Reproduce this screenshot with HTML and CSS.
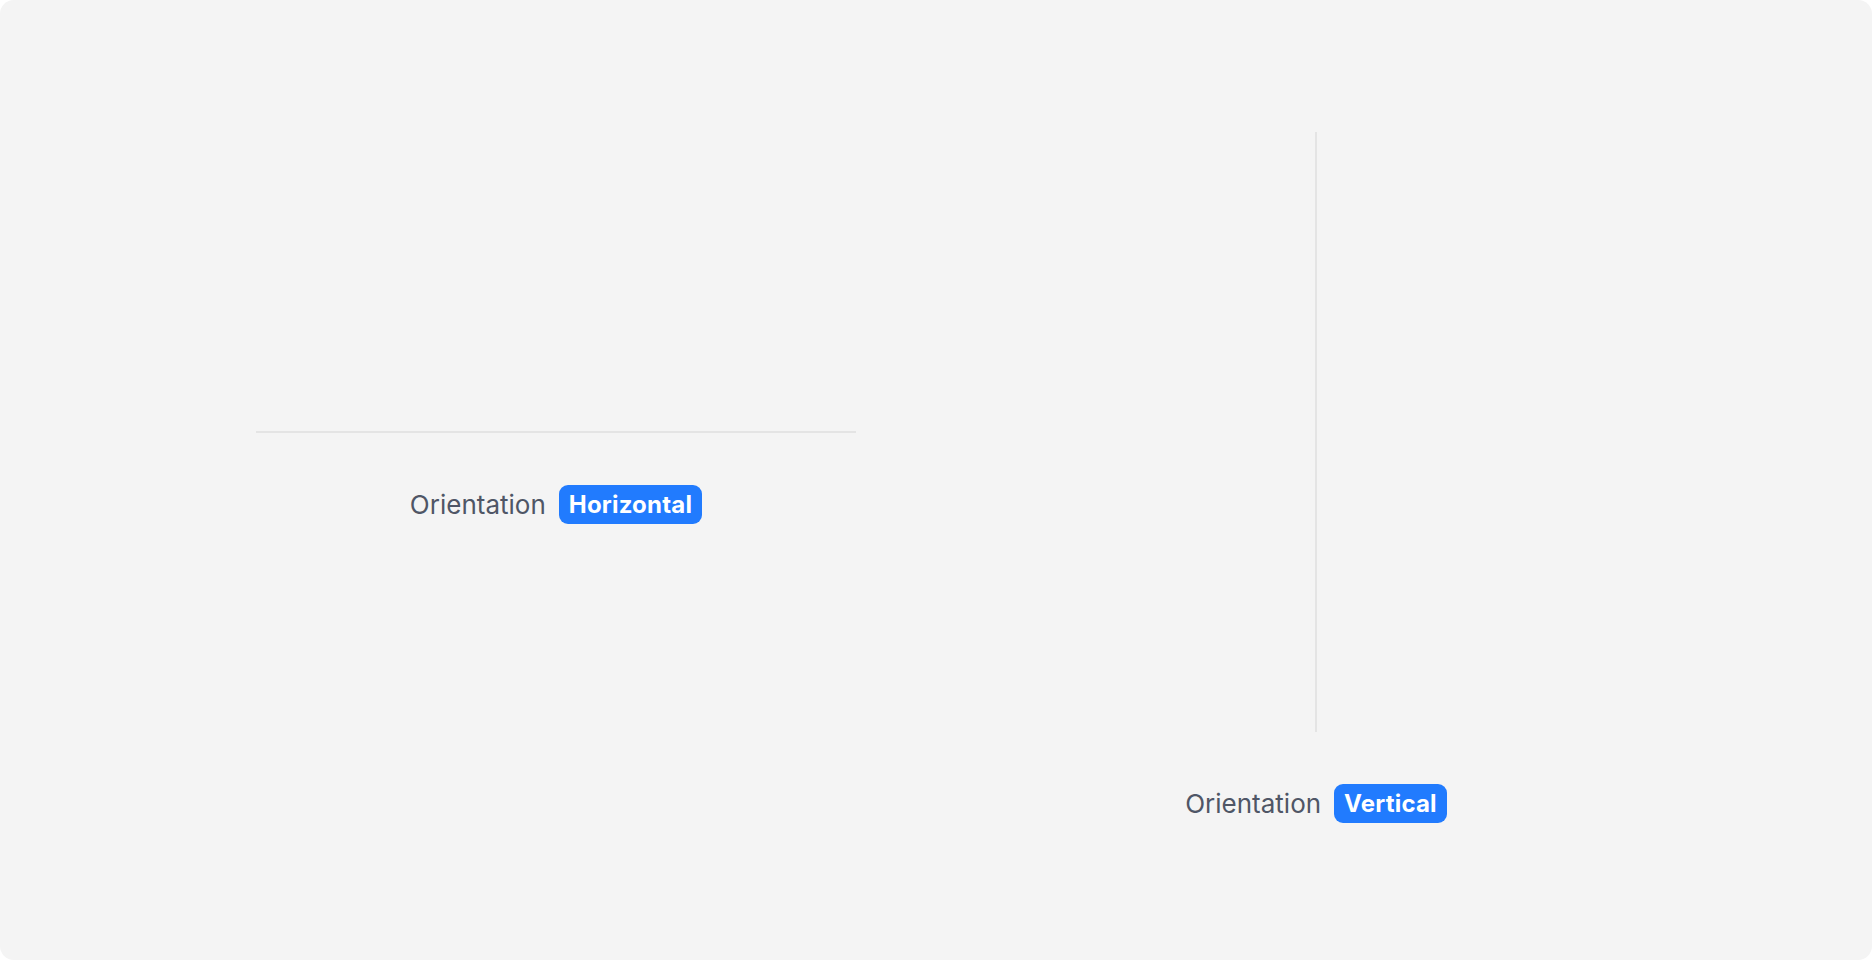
FILE: index.html
```html
<!DOCTYPE html>
<html lang="en">
<head>
    <meta charset="UTF-8">
    <meta name="viewport" content="width=device-width, initial-scale=1.0">
    <title>Divider Orientation</title>
    <link rel="stylesheet" href="styles.css">
</head>
<body>
    <div class="card">
        <div class="demo">
            <div class="divider divider-horizontal"></div>
            <div class="label-row">
                <span class="label">Orientation</span>
                <span class="badge">Horizontal</span>
            </div>
        </div>
        <div class="demo">
            <div class="divider divider-vertical"></div>
            <div class="label-row">
                <span class="label">Orientation</span>
                <span class="badge">Vertical</span>
            </div>
        </div>
    </div>
</body>
</html>
```

FILE: styles.css
```css
body {
    margin: 0;
    background: #ffffff;
    font-family: Inter, "Noto Sans", sans-serif;
    height: 100vh;
    overflow: hidden;
}

.card {
    height: 100vh;
    box-sizing: border-box;
    padding-bottom: 5px;
    background-color: #f4f4f4;
    border-radius: 14px;
    display: grid;
    grid-template-columns: repeat(2, 760px);
    justify-content: center;
    align-items: center;
}

.demo {
    display: flex;
    flex-direction: column;
    align-items: center;
}

.divider {
    background-color: #e4e4e4;
}

.divider-horizontal {
    width: 600px;
    height: 2px;
}

.divider-vertical {
    width: 2px;
    height: 600px;
}

.label-row {
    display: flex;
    align-items: center;
    gap: 13px;
    margin-top: 52px;
}

.label {
    font-size: 26px;
    color: #4f5666;
    line-height: 39px;
}

.badge {
    background-color: #217bfe;
    color: #ffffff;
    font-size: 24px;
    font-weight: 700;
    letter-spacing: 0.2px;
    line-height: 29px;
    padding: 5px 10px;
    border-radius: 9px;
}
```
